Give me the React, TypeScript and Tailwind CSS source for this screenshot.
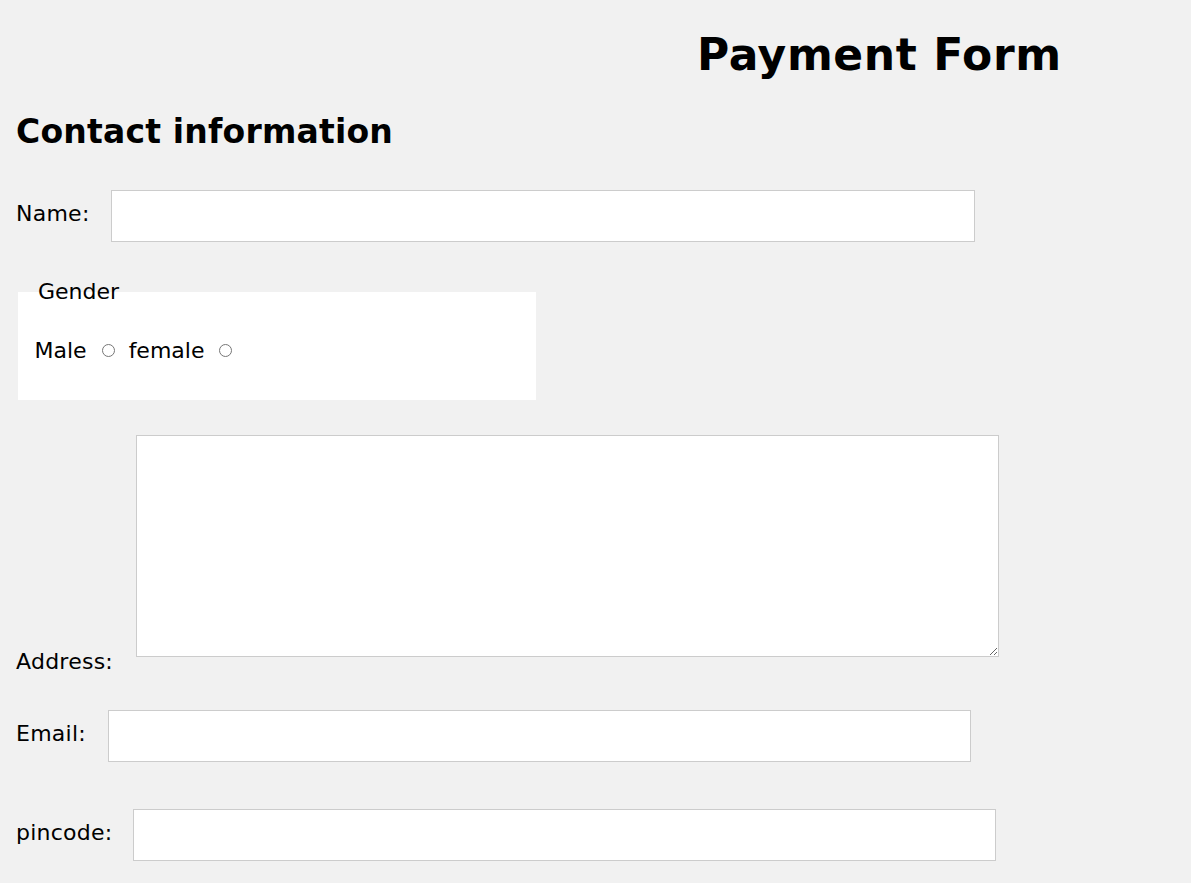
import React from "react";

export default function App() {
  return (
    <div
      className="min-h-screen bg-[#f1f1f1] px-4 pt-[29px] text-[22px] tracking-[0.25px] text-black"
      style={{ fontFamily: '"DejaVu Sans", Verdana, sans-serif' }}
    >
      <h1 className="pl-[681px] text-[44px] font-bold leading-[51px] tracking-[0.6px]">Payment Form</h1>
      <h2 className="mt-[33px] text-[33px] font-bold leading-[38px] tracking-[0.2px]">Contact information</h2>

      <div className="mt-[39px] flex items-center">
        <label className="pb-[4px] leading-[25.6px]">Name:</label>
        <input
          type="text"
          className="ml-[21px] h-[52px] w-[864px] border border-[#cccccc] bg-white px-3 outline-none"
        />
      </div>

      <fieldset className="ml-[2px] mt-[37px] w-[518px] bg-white px-[16.5px] pb-[37px] tracking-normal">
        <legend className="px-[3.5px] leading-[25.6px]">Gender</legend>
        <div className="mt-[33px] flex items-center">
          <span className="leading-[25.6px]">Male</span>
          <input type="radio" name="gender" className="ml-[15px] mr-[14px] h-[13px] w-[13px]" />
          <span className="leading-[25.6px]">female</span>
          <input type="radio" name="gender" className="ml-[15px] h-[13px] w-[13px]" />
        </div>
      </fieldset>

      <div className="mt-[35px] flex items-end">
        <label className="leading-[25.6px]">Address:</label>
        <textarea className="mb-[17px] ml-[23px] h-[222px] w-[863px] border border-[#cccccc] bg-white outline-none" />
      </div>

      <div className="mt-[36px] flex items-center">
        <label className="pb-[4px] leading-[25.6px]">Email:</label>
        <input
          type="email"
          className="ml-[22px] h-[52px] w-[863px] border border-[#cccccc] bg-white px-3 outline-none"
        />
      </div>

      <div className="mt-[47px] flex items-center">
        <label className="pb-[4px] leading-[25.6px]">pincode:</label>
        <input
          type="text"
          className="ml-[20px] h-[52px] w-[863px] border border-[#cccccc] bg-white px-3 outline-none"
        />
      </div>
    </div>
  );
}
